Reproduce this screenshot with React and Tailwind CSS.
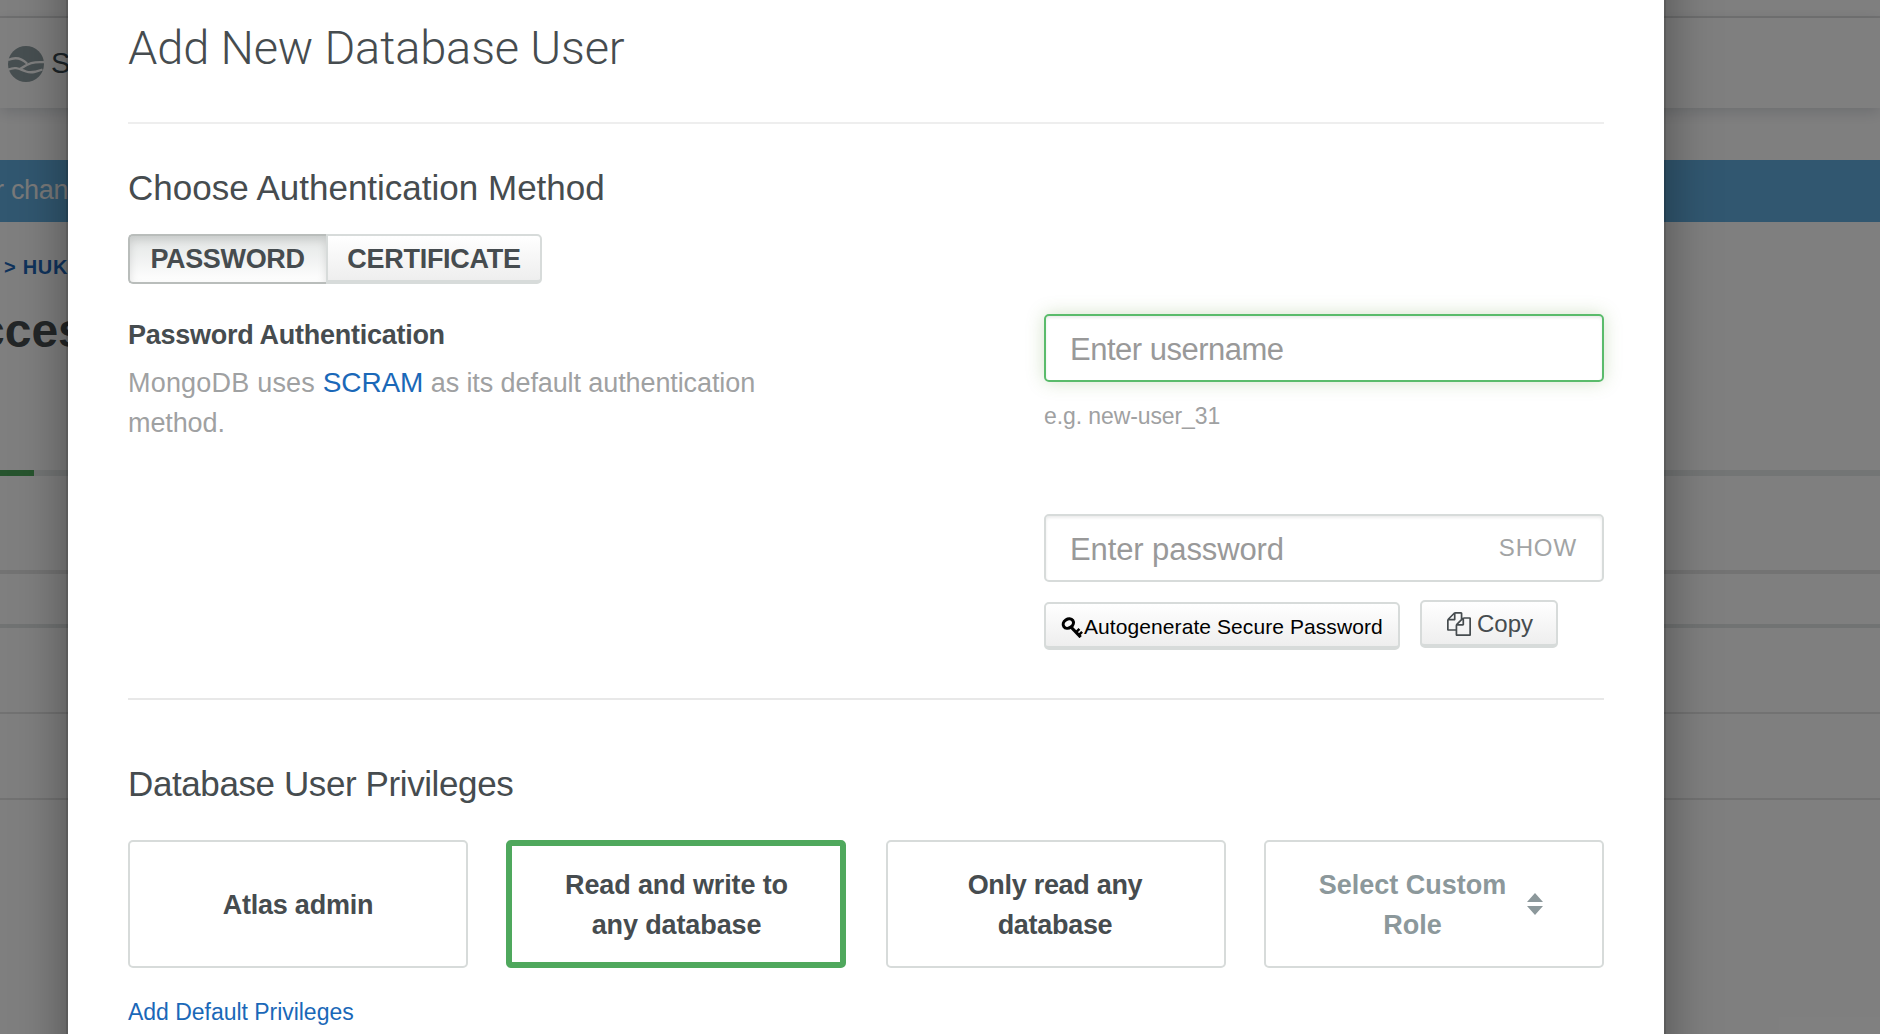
import React from "react";

const CARD = "flex h-32 items-center justify-center rounded-[5px] bg-white text-center text-[27px] leading-10 font-bold";

function WaveLogo() {
  return (
    <svg className="h-9 w-9 shrink-0" viewBox="0 0 36 36">
      <circle cx="18" cy="18" r="18" fill="#8f9ea2" />
      <path
        d="M0 14C8 10.500 14 12.500 19 17.500M0 23.800C8 20 12 23.500 18 25.500S29 25.500 34.500 23.500M12 23C20 17 26 15.500 36 16.200"
        fill="none"
        stroke="#fff"
        strokeWidth="2.300"
      />
    </svg>
  );
}

function KeyIcon() {
  return (
    <svg className="mt-px h-[21px] w-[23px] shrink-0" viewBox="0 0 22 20" fill="none" stroke="#000">
      <ellipse cx="7" cy="6.200" rx="5.200" ry="4.200" transform="rotate(-35 7 6.200)" strokeWidth="3" />
      <path d="M9.500 9.500 18.800 19.200" strokeWidth="3" />
      <path d="M14.500 14.500 17.600 11.400M17.200 17 20.200 14.200" strokeWidth="2.400" />
    </svg>
  );
}

function CopyIcon() {
  return (
    <svg className="h-6 w-6 shrink-0" viewBox="0 0 1792 1792" fill="#464c4f">
      <path d="M1696 384q40 0 68 28t28 68v1216q0 40-28 68t-68 28h-960q-40 0-68-28t-28-68v-288h-544q-40 0-68-28t-28-68v-672q0-40 20-88t48-76l408-408q28-28 76-48t88-20h416q40 0 68 28t28 68v328q68-40 128-40h416zm-544 213l-299 299h299v-299zm-640-384l-299 299h299v-299zm196 647l316-316v-416h-384v416q0 40-28 68t-68 28h-416v640h512v-256q0-40 20-88t48-76zm956 804v-1152h-384v416q0 40-28 68t-68 28h-416v640h896z" />
    </svg>
  );
}

/* Project page that sits behind the dialog */
function Backdrop() {
  return (
    <div className="relative h-full w-full bg-white">
      <div className="h-[18px] border-b-2 border-[#e4e4e4]" />
      <div className="relative flex h-[90px] items-center gap-[7px] bg-white pt-px pl-2 text-[29px] text-[#3a4a52] shadow-[0_4px_14px_rgba(20,30,60,0.16)]">
        <WaveLogo />
        <span>S</span>
      </div>
      <div className="mt-[52px] flex h-[62px] items-center bg-[#62aee0] pb-px text-[27px] text-[#f4f4f4]">
        <span className="-ml-[5px] tracking-[-0.3px]">r chan</span>
      </div>
      <div className="mt-[31px] pl-1 text-[20px] leading-7 font-bold tracking-[0.7px] text-[#1f67b8]">&gt; HUKA</div>
      <div className="mt-5 -ml-[22px] text-[48px] leading-[60px] font-bold text-[#464c4f]">cces</div>
      <div className="mt-[109px] h-1.5 bg-[#e6ebea]">
        <div className="h-full w-[34px] bg-[#4fa85d]" />
      </div>
      <div className="mt-[94px] h-1 bg-[#e6e6e6]" />
      <div className="mt-[50px] h-1 bg-[#e3e7e7]" />
      <div className="mt-[84px] h-0.5 bg-[#e4e4e4]" />
      <div className="mt-[84px] h-0.5 bg-[#e4e4e4]" />
      <div className="absolute inset-0 bg-black/50" />
    </div>
  );
}

function AuthToggle() {
  return (
    <div className="mt-[26px] flex h-[50px] text-[27px] font-bold">
      <button className="w-[198px] rounded-l-[5px] border-2 border-r-0 border-[#b9bdbb] bg-gradient-to-b from-[#e2e5e4] to-white pr-px tracking-[-0.35px] shadow-[inset_0_4px_8px_rgba(0,0,0,0.12)]">
        PASSWORD
      </button>
      <button className="w-[216px] rounded-r-[5px] border-2 border-b-4 border-[#d7dbda] bg-gradient-to-b from-white to-[#eeeeee] pt-0.5 tracking-[-0.28px]">
        CERTIFICATE
      </button>
    </div>
  );
}

function Credentials() {
  return (
    <div className="-mt-px w-[560px]">
      <input
        className="block h-[68px] w-full rounded-[5px] border-2 border-[#5abb6b] pt-1 pl-6 text-[31px] tracking-[-0.5px] shadow-[inset_0_2px_3px_rgba(0,0,0,0.08),0_0_18px_rgba(100,150,60,0.28)] outline-none placeholder:text-[#999999]"
        placeholder="Enter username"
      />
      <p className="mt-[18px] text-[23px] leading-8 tracking-[-0.1px] text-[#9fa1a2]">e.g. new-user_31</p>
      <div className="mt-[82px] flex h-[68px] items-center rounded-[5px] border-2 border-[#d7dbda] pr-[25px] shadow-[inset_0_2px_3px_rgba(0,0,0,0.08)]">
        <input
          className="h-full min-w-0 flex-1 pt-1 pl-6 text-[31px] tracking-[-0.1px] outline-none placeholder:text-[#999999]"
          placeholder="Enter password"
        />
        <button className="text-[24px] tracking-[0.9px] text-[#a2a4a5]">SHOW</button>
      </div>
      <div className="mt-[18px] flex items-start gap-5">
        <button className="mt-0.5 flex h-12 w-[356px] items-center rounded-[5px] border-2 border-b-4 border-[#d7dbda] bg-gradient-to-b from-white to-[#eeeeee] pt-1 pl-[15px] text-[21px] whitespace-nowrap text-black">
          <KeyIcon />
          <span className="tracking-[0.08px]">Autogenerate Secure Password</span>
        </button>
        <button className="flex h-12 w-[138px] items-center gap-1.5 rounded-[5px] border-2 border-b-4 border-[#d7dbda] bg-gradient-to-b from-white to-[#eeeeee] pt-px pl-[25px] text-[24px]">
          <CopyIcon />
          <span>Copy</span>
        </button>
      </div>
    </div>
  );
}

function Privileges() {
  return (
    <div className="mt-9 flex gap-[38px]">
      <button className={`${CARD} w-[340px] border-2 border-[#d7dbda] pt-0.5 tracking-[-0.25px]`}>Atlas admin</button>
      <button className={`${CARD} w-[340px] border-[6px] border-[#4fa85d] pt-0.5 pl-px tracking-[-0.12px]`}>
        <span>
          Read and write to
          <br />
          any database
        </span>
      </button>
      <button className={`${CARD} ml-0.5 w-[340px] border-2 border-[#d7dbda] pt-0.5 pr-0.5 tracking-[-0.3px]`}>
        <span>
          Only read any
          <br />
          database
        </span>
      </button>
      <button className={`${CARD} w-[340px] gap-[21px] border-2 border-[#d7dbda] pt-0.5 pr-1.5 text-[#8c989b]`}>
        <span>
          Select Custom
          <br />
          Role
        </span>
        <svg className="mb-0.5 h-[22px] w-4" viewBox="0 0 16 22" fill="#8c989b">
          <path d="M8 0 16 9H0ZM0 13H16L8 22Z" />
        </svg>
      </button>
    </div>
  );
}

export default function App() {
  return (
    <div className="relative h-screen w-full overflow-hidden font-['Liberation_Sans',Arial,sans-serif]">
      <Backdrop />
      <div className="absolute -inset-y-20 left-[68px] w-[1596px] bg-white px-[60px] pt-[100px] text-[#464c4f] shadow-[0_0_0_2px_rgba(0,0,0,0.1),0_0_50px_rgba(0,0,0,0.4)]">
        <h1 className="font-['Roboto',sans-serif] text-[47px] leading-[56px] font-light tracking-[-0.15px]">Add New Database User</h1>
        <div className="mt-[46px] h-0.5 bg-[#eeeeee]" />
        <h2 className="mt-11 text-[35px] leading-10">Choose Authentication Method</h2>
        <AuthToggle />
        <div className="mt-[31px] flex justify-between">
          <div className="w-[680px]">
            <h3 className="text-[27px] leading-10 font-bold tracking-[-0.27px]">Password Authentication</h3>
            <p className="mt-2 text-[27px] leading-10 tracking-[-0.1px] text-[#9fa1a2]">
              <span className="tracking-[0.2px]">MongoDB uses </span>
              <a className="text-[28px] tracking-[-0.1px] text-[#1a68b8]">SCRAM</a> as its default authentication
              <br />
              method.
            </p>
          </div>
          <Credentials />
        </div>
        <div className="mt-12 h-0.5 bg-[#e8e8e8]" />
        <h2 className="mt-16 text-[35px] leading-10 tracking-[-0.4px]">Database User Privileges</h2>
        <Privileges />
        <a className="mt-7 block text-[23px] leading-8 tracking-[-0.03px] text-[#1a68b8]">Add Default Privileges</a>
      </div>
    </div>
  );
}
